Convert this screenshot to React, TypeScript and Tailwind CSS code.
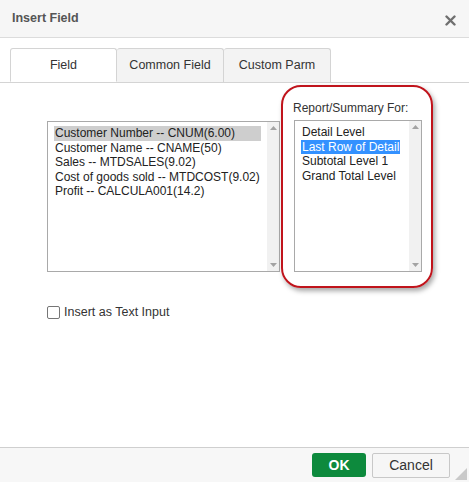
import React from 'react';

const fields = [
  'Customer Number -- CNUM(6.00)',
  'Customer Name -- CNAME(50)',
  'Sales -- MTDSALES(9.02)',
  'Cost of goods sold -- MTDCOST(9.02)',
  'Profit -- CALCULA001(14.2)',
];

const levels = ['Detail Level', 'Last Row of Detail', 'Subtotal Level 1', 'Grand Total Level'];

function ScrollTrack() {
  return (
    <div className="w-[12px] h-full bg-[#f1f1f1] flex flex-col justify-between items-center py-[4px]">
      <svg width="7" height="4" viewBox="0 0 7 4">
        <path d="M0 4 L3.5 0 L7 4 Z" fill="#a3a3a3" />
      </svg>
      <svg width="7" height="4" viewBox="0 0 7 4">
        <path d="M0 0 L3.5 4 L7 0 Z" fill="#a3a3a3" />
      </svg>
    </div>
  );
}

export default function App() {
  return (
    <div
      className="w-[469px] h-[482px] bg-white flex flex-col text-[#333] overflow-hidden relative"
      style={{ fontFamily: '"Liberation Sans", Arial, sans-serif' }}
    >
      {/* Header */}
      <div className="h-[38px] bg-[#f6f6f6] border-b border-[#dcdcdc] flex items-center justify-between pl-[12px] pr-[13px]">
        <span className="text-[12.5px] font-bold text-[#555]">Insert Field</span>
        <svg width="11" height="11" viewBox="0 0 11 11" className="mt-[3px]">
          <path d="M1.5 1.5 L9.5 9.5 M9.5 1.5 L1.5 9.5" stroke="#6f6f6f" strokeWidth="2.4" strokeLinecap="round" />
        </svg>
      </div>

      {/* Tabs */}
      <div className="pt-[10px] px-[10px] border-b border-[#d4d4d4] flex">
        <div className="w-[107px] h-[34px] -mb-px bg-white border border-[#d4d4d4] border-b-white rounded-t-[3px] flex items-center justify-center text-[12.5px] text-[#333]">
          Field
        </div>
        <div className="w-[107px] h-[34px] bg-[#f3f3f3] border border-l-0 border-[#d4d4d4] border-b-0 rounded-t-[3px] flex items-center justify-center text-[12.5px] text-[#333]">
          Common Field
        </div>
        <div className="w-[107px] h-[34px] bg-[#f3f3f3] border border-l-0 border-[#d4d4d4] border-b-0 rounded-t-[3px] flex items-center justify-center text-[12.5px] text-[#333]">
          Custom Parm
        </div>
      </div>

      {/* Content */}
      <div className="flex-1 pl-[47px]">
        <div className="flex items-start">
          <div className="mt-[38px] w-[233px] h-[151px] border border-[#a9a9a9] flex">
            <div className="flex-1 pl-[6px] pt-[4px] text-[12px] leading-[14.5px] text-[#222] overflow-hidden">
              <div className="w-max">
                {fields.map((f, i) => (
                  <div key={f} className={`whitespace-nowrap px-px ${i === 0 ? 'bg-[#cecece]' : ''}`}>
                    {f}
                  </div>
                ))}
              </div>
            </div>
            <ScrollTrack />
          </div>

          <div className="ml-[1px] mt-[2px] w-[152px] h-[203px] border-2 border-[#c0141c] rounded-[20px] pl-[11px] pt-[14px] shadow-[2px_3px_5px_rgba(0,0,0,0.35)]">
            <div className="text-[12px] leading-[14px] text-[#333] mb-[5px] -ml-[1px]">Report/Summary For:</div>
            <div className="w-[128px] h-[152px] border border-[#a9a9a9] flex">
              <div className="flex-1 pl-[6px] pt-[4px] text-[12px] leading-[14.5px] text-[#222] overflow-hidden">
                <div className="w-max">
                  {levels.map((l, i) => (
                    <div key={l} className={`whitespace-nowrap px-px ${i === 1 ? 'bg-[#3391ff] text-white' : ''}`}>
                      {l}
                    </div>
                  ))}
                </div>
              </div>
              <ScrollTrack />
            </div>
          </div>
        </div>

        <label className="mt-[15px] flex items-center gap-[4px] text-[12.5px] text-[#333]">
          <span className="w-[13px] h-[13px] border border-[#767676] rounded-[2px] bg-white" />
          Insert as Text Input
        </label>
      </div>

      {/* Footer */}
      <div className="h-[35px] bg-[#f7f7f7] border-t border-[#cfcfcf] flex items-center justify-end pr-[19px] gap-[6px]">
        <button className="w-[54px] h-[24px] bg-[#0d8a3d] rounded-[3px] text-white text-[14px] font-bold">
          OK
        </button>
        <button className="w-[78px] h-[25px] bg-[#f6f6f6] border border-[#c8c8c8] rounded-[2px] text-[#333] text-[14px]">
          Cancel
        </button>
      </div>

      {/* resize grip */}
      <svg width="12" height="12" viewBox="0 0 12 12" className="absolute right-[2px] bottom-[2px]">
        <path d="M12 0 L12 12 L0 12 Z" fill="#c9c9c9" />
      </svg>
    </div>
  );
}
